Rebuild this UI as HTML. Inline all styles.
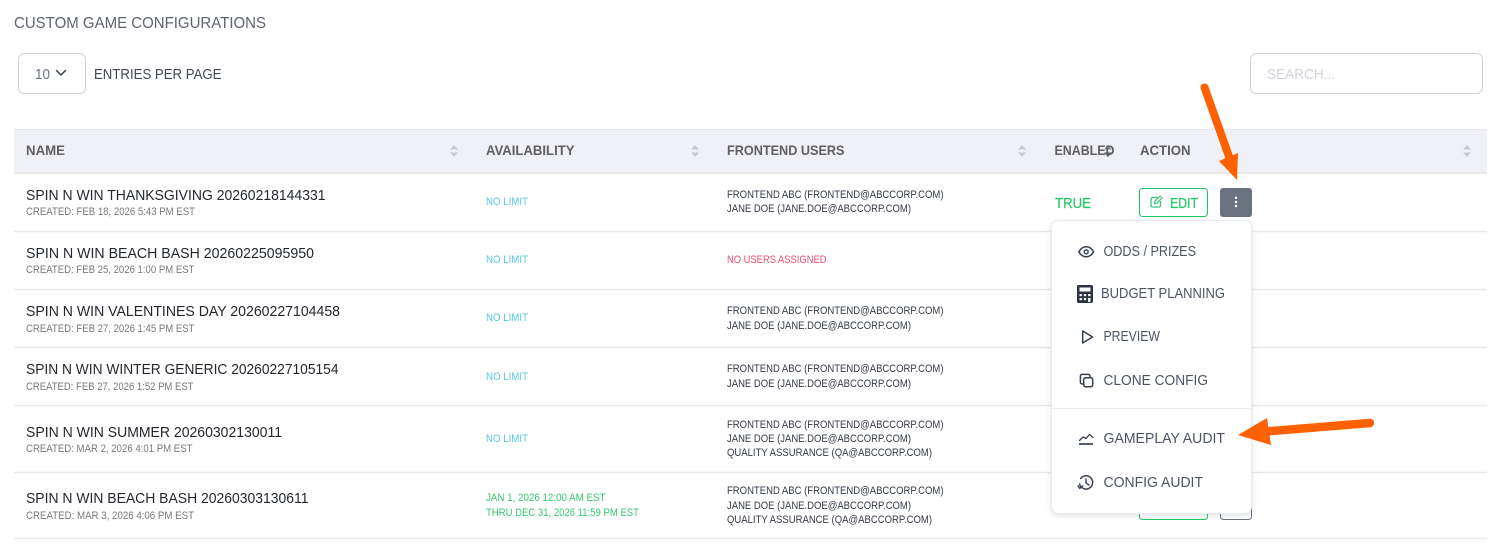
<!DOCTYPE html>
<html lang="en">
<head>
<meta charset="utf-8">
<title>Custom Game Configurations</title>
<style>
html,body{margin:0;padding:0;background:#fff;width:1505px;height:549px;overflow:hidden}
svg{display:block;position:absolute;left:0;top:0}
text{font-family:"Liberation Sans",sans-serif;white-space:pre}
.h{font-size:13.6px;font-weight:700;fill:#5f5f62}
.n{font-size:14.8px;fill:#24282e}
.c{font-size:10.6px;fill:#77797d}
.a{font-size:10.6px;fill:#58c8e2}
.u{font-size:10.6px;fill:#353b47}
.m{font-size:14.8px;fill:#4b5563}
.s{fill:#c6c8cc}
.l{stroke:#e8e9ec;stroke-width:1.5}
</style>
</head>
<body>
<svg width="1505" height="549" viewBox="0 0 1505 549" xmlns="http://www.w3.org/2000/svg">
<rect width="1505" height="549" fill="#fff"/>

<text x="14" y="28" font-size="15.500" fill="#5e6470" textLength="252" lengthAdjust="spacingAndGlyphs">CUSTOM GAME CONFIGURATIONS</text>

<rect x="18.500" y="53.500" width="67" height="40" rx="6" fill="#fff" stroke="#cbd1d9"/>
<text x="35" y="79" font-size="14.800" fill="#6b7280" textLength="15" lengthAdjust="spacingAndGlyphs">10</text>
<path d="M56.500 70.500 61 75 65.500 70.500" fill="none" stroke="#374151" stroke-width="1.500" stroke-linecap="round" stroke-linejoin="round"/>
<text x="94" y="79" font-size="14.800" fill="#414955" textLength="127.500" lengthAdjust="spacingAndGlyphs">ENTRIES PER PAGE</text>

<rect x="1250.500" y="53.500" width="232" height="40" rx="6" fill="#fff" stroke="#cbd1d9"/>
<text x="1267" y="79" font-size="14.800" fill="#d0d4da" textLength="68" lengthAdjust="spacingAndGlyphs">SEARCH...</text>

<rect x="14" y="129" width="1473" height="45" fill="#f0f1f6"/>
<rect x="14" y="129" width="1473" height="1" fill="#e6e7ed"/>
<rect x="14" y="172" width="1473" height="2" fill="#e8e9ed"/>

<path class="s" d="M454 145 458 149.500H450Z M454 157 458 152.500H450Z"/>
<path class="s" d="M695 145 699 149.500H691Z M695 157 699 152.500H691Z"/>
<path class="s" d="M1022 145 1026 149.500H1018Z M1022 157 1026 152.500H1018Z"/>
<path fill="#7f8fa8" d="M1108 145 1112 149.500H1104Z"/>
<path fill="#55595f" d="M1108 157 1112 152.500H1104Z"/>
<path class="s" d="M1467 145 1471 149.500H1463Z M1467 157 1471 152.500H1463Z"/>

<text class="h" x="26" y="155" textLength="39" lengthAdjust="spacingAndGlyphs">NAME</text>
<text class="h" x="486" y="155" textLength="88.500" lengthAdjust="spacingAndGlyphs">AVAILABILITY</text>
<text class="h" x="727" y="155" textLength="117.500" lengthAdjust="spacingAndGlyphs">FRONTEND USERS</text>
<text class="h" x="1054.500" y="155" textLength="60" lengthAdjust="spacingAndGlyphs">ENABLED</text>
<text class="h" x="1140" y="155" textLength="50.500" lengthAdjust="spacingAndGlyphs">ACTION</text>

<line class="l" x1="14" y1="231.500" x2="1487" y2="231.500"/>
<line class="l" x1="14" y1="289.500" x2="1487" y2="289.500"/>
<line class="l" x1="14" y1="347.500" x2="1487" y2="347.500"/>
<line class="l" x1="14" y1="405.500" x2="1487" y2="405.500"/>
<line class="l" x1="14" y1="472.500" x2="1487" y2="472.500"/>
<line class="l" x1="14" y1="538.500" x2="1487" y2="538.500"/>

<text class="n" x="26" y="200" textLength="299.500" lengthAdjust="spacingAndGlyphs">SPIN N WIN THANKSGIVING 20260218144331</text>
<text class="c" x="26" y="215" textLength="169" lengthAdjust="spacingAndGlyphs">CREATED: FEB 18, 2026 5:43 PM EST</text>
<text class="n" x="26" y="258" textLength="288" lengthAdjust="spacingAndGlyphs">SPIN N WIN BEACH BASH 20260225095950</text>
<text class="c" x="26" y="273" textLength="168.500" lengthAdjust="spacingAndGlyphs">CREATED: FEB 25, 2026 1:00 PM EST</text>
<text class="n" x="26" y="316" textLength="314" lengthAdjust="spacingAndGlyphs">SPIN N WIN VALENTINES DAY 20260227104458</text>
<text class="c" x="26" y="332" textLength="168.500" lengthAdjust="spacingAndGlyphs">CREATED: FEB 27, 2026 1:45 PM EST</text>
<text class="n" x="26" y="374" textLength="312.500" lengthAdjust="spacingAndGlyphs">SPIN N WIN WINTER GENERIC 20260227105154</text>
<text class="c" x="26" y="390" textLength="167.500" lengthAdjust="spacingAndGlyphs">CREATED: FEB 27, 2026 1:52 PM EST</text>
<text class="n" x="26" y="437" textLength="256" lengthAdjust="spacingAndGlyphs">SPIN N WIN SUMMER 20260302130011</text>
<text class="c" x="26" y="452" textLength="166.500" lengthAdjust="spacingAndGlyphs">CREATED: MAR 2, 2026 4:01 PM EST</text>
<text class="n" x="26" y="503" textLength="282.500" lengthAdjust="spacingAndGlyphs">SPIN N WIN BEACH BASH 20260303130611</text>
<text class="c" x="26" y="519" textLength="168" lengthAdjust="spacingAndGlyphs">CREATED: MAR 3, 2026 4:06 PM EST</text>

<text class="a" x="486" y="205" textLength="42" lengthAdjust="spacingAndGlyphs">NO LIMIT</text>
<text class="a" x="486" y="263" textLength="42" lengthAdjust="spacingAndGlyphs">NO LIMIT</text>
<text class="a" x="486" y="321" textLength="42" lengthAdjust="spacingAndGlyphs">NO LIMIT</text>
<text class="a" x="486" y="380" textLength="42" lengthAdjust="spacingAndGlyphs">NO LIMIT</text>
<text class="a" x="486" y="442" textLength="42" lengthAdjust="spacingAndGlyphs">NO LIMIT</text>
<text x="486" y="501" font-size="10.600" fill="#35c96f" textLength="119.500" lengthAdjust="spacingAndGlyphs">JAN 1, 2026 12:00 AM EST</text>
<text x="486" y="516" font-size="10.600" fill="#35c96f" textLength="153" lengthAdjust="spacingAndGlyphs">THRU DEC 31, 2026 11:59 PM EST</text>

<text class="u" x="727" y="198" textLength="216.500" lengthAdjust="spacingAndGlyphs">FRONTEND ABC (FRONTEND@ABCCORP.COM)</text>
<text class="u" x="727" y="212" textLength="184" lengthAdjust="spacingAndGlyphs">JANE DOE (JANE.DOE@ABCCORP.COM)</text>
<text x="727" y="263" font-size="10.600" fill="#f2506e" textLength="99.500" lengthAdjust="spacingAndGlyphs">NO USERS ASSIGNED</text>
<text class="u" x="727" y="314" textLength="216.500" lengthAdjust="spacingAndGlyphs">FRONTEND ABC (FRONTEND@ABCCORP.COM)</text>
<text class="u" x="727" y="329" textLength="184" lengthAdjust="spacingAndGlyphs">JANE DOE (JANE.DOE@ABCCORP.COM)</text>
<text class="u" x="727" y="372" textLength="216.500" lengthAdjust="spacingAndGlyphs">FRONTEND ABC (FRONTEND@ABCCORP.COM)</text>
<text class="u" x="727" y="387" textLength="184" lengthAdjust="spacingAndGlyphs">JANE DOE (JANE.DOE@ABCCORP.COM)</text>
<text class="u" x="727" y="428" textLength="216.500" lengthAdjust="spacingAndGlyphs">FRONTEND ABC (FRONTEND@ABCCORP.COM)</text>
<text class="u" x="727" y="442" textLength="184" lengthAdjust="spacingAndGlyphs">JANE DOE (JANE.DOE@ABCCORP.COM)</text>
<text class="u" x="727" y="456" textLength="205" lengthAdjust="spacingAndGlyphs">QUALITY ASSURANCE (QA@ABCCORP.COM)</text>
<text class="u" x="727" y="494" textLength="216.500" lengthAdjust="spacingAndGlyphs">FRONTEND ABC (FRONTEND@ABCCORP.COM)</text>
<text class="u" x="727" y="509" textLength="184" lengthAdjust="spacingAndGlyphs">JANE DOE (JANE.DOE@ABCCORP.COM)</text>
<text class="u" x="727" y="523" textLength="205" lengthAdjust="spacingAndGlyphs">QUALITY ASSURANCE (QA@ABCCORP.COM)</text>

<text x="1055" y="208" font-size="14.800" fill="#22c565" stroke="#22c565" stroke-width=".15" textLength="36" lengthAdjust="spacingAndGlyphs">TRUE</text>

<rect x="1139.500" y="188.500" width="68" height="28" rx="3" fill="#fff" stroke="#22c565"/>
<path d="M1158 197.500H1152.500a1.500 1.500 0 0 0-1.500 1.500v6.500a1.500 1.500 0 0 0 1.500 1.500h6.500a1.500 1.500 0 0 0 1.500-1.500V201" fill="none" stroke="#36c878" stroke-width="1.300"/>
<path d="M1154.500 203.500 1155 201 1160 196 1162 198 1157 203Z" fill="none" stroke="#36c878" stroke-width="1.200" stroke-linejoin="round"/>
<text x="1170" y="208" font-size="14.800" fill="#2cc96e" stroke="#2cc96e" stroke-width=".35" textLength="28" lengthAdjust="spacingAndGlyphs">EDIT</text>

<rect x="1220" y="188" width="32" height="29" rx="3" fill="#6b7280"/>
<circle cx="1236" cy="197.800" r="1.250" fill="#fff"/>
<circle cx="1236" cy="202" r="1.250" fill="#fff"/>
<circle cx="1236" cy="206" r="1.250" fill="#fff"/>

<rect x="1139.500" y="500.500" width="68" height="19" rx="3" fill="#fff" stroke="#22c565"/>
<rect x="1220.500" y="500.500" width="31" height="19" rx="3" fill="#fff" stroke="#6b7280"/>

<rect x="1051.500" y="220.500" width="200" height="293" rx="7" fill="#fff" stroke="#e9ebee" style="filter:drop-shadow(0 2px 3px rgba(40,50,70,.14))"/>
<line x1="1052" y1="408.500" x2="1251" y2="408.500" stroke="#eceef0"/>

<text class="m" x="1103.500" y="256" textLength="92.500" lengthAdjust="spacingAndGlyphs">ODDS / PRIZES</text>
<text class="m" x="1101" y="298" textLength="124" lengthAdjust="spacingAndGlyphs">BUDGET PLANNING</text>
<text class="m" x="1103.500" y="341" textLength="56.500" lengthAdjust="spacingAndGlyphs">PREVIEW</text>
<text class="m" x="1103.500" y="385" textLength="104.500" lengthAdjust="spacingAndGlyphs">CLONE CONFIG</text>
<text class="m" x="1103.500" y="443" textLength="121.500" lengthAdjust="spacingAndGlyphs">GAMEPLAY AUDIT</text>
<text class="m" x="1103.500" y="487" textLength="99.500" lengthAdjust="spacingAndGlyphs">CONFIG AUDIT</text>

<path d="M1078.800 251.800C1081 248.200 1083.500 246.800 1086.200 246.800S1091.500 248.200 1093.600 251.800C1091.500 255.400 1089 256.800 1086.200 256.800S1081 255.400 1078.800 251.800Z" fill="none" stroke="#374151" stroke-width="1.500" stroke-linejoin="round"/>
<circle cx="1086.200" cy="251.800" r="2" fill="none" stroke="#374151" stroke-width="1.400"/>

<rect x="1077" y="285" width="16" height="18" rx="1.800" fill="#2b3342"/>
<rect x="1079.500" y="287.500" width="11" height="4" fill="#fff"/>
<g fill="#fff">
<rect x="1079.500" y="294" width="2.400" height="2.200"/><rect x="1083.800" y="294" width="2.400" height="2.200"/><rect x="1088.100" y="294" width="2.400" height="2.200"/>
<rect x="1079.500" y="298" width="2.400" height="2.200"/><rect x="1083.800" y="298" width="2.400" height="2.200"/><rect x="1088.100" y="298" width="2.400" height="4"/>
</g>

<path d="M1082.700 331V343L1092.600 337Z" fill="none" stroke="#374151" stroke-width="1.500" stroke-linejoin="round"/>

<rect x="1083.700" y="377.700" width="9" height="9" rx="1.800" fill="none" stroke="#374151" stroke-width="1.500"/>
<path d="M1083 384H1082.200A1.800 1.800 0 0 1 1080.400 382.200V376.200A1.800 1.800 0 0 1 1082.200 374.400H1088.200A1.800 1.800 0 0 1 1090 376.200V377" fill="none" stroke="#374151" stroke-width="1.500"/>

<path d="M1079.500 440.500 1083 437 1086 438.500 1089.500 434.500 1093 437.500" fill="none" stroke="#374151" stroke-width="1.300" stroke-linejoin="round" stroke-linecap="round"/>
<line x1="1079" y1="444" x2="1093" y2="444" stroke="#374151" stroke-width="1.700"/>

<g transform="translate(0 -10.500)">
<path d="M1080.700 489A6.630 6.630 0 1 1 1079.600 494.500" fill="none" stroke="#374151" stroke-width="1.500" stroke-linecap="round"/>
<path d="M1077.800 495.800 1079.800 498.800 1083.300 496" fill="none" stroke="#374151" stroke-width="1.400"/>
<path d="M1086 489.500V493.500L1089 495.500" fill="none" stroke="#374151" stroke-width="1.400" stroke-linecap="round"/>
</g>

<line x1="1204.500" y1="87.500" x2="1231" y2="162" stroke="#ff6000" stroke-width="8" stroke-linecap="round"/>
<path d="M1219 161 1238 153 1237 180Z" fill="#ff6000"/>
<line x1="1370" y1="423" x2="1265" y2="431.500" stroke="#ff6000" stroke-width="8.500" stroke-linecap="round"/>
<path d="M1238 435 1267 418 1271 445Z" fill="#ff6000"/>
</svg>
</body>
</html>
